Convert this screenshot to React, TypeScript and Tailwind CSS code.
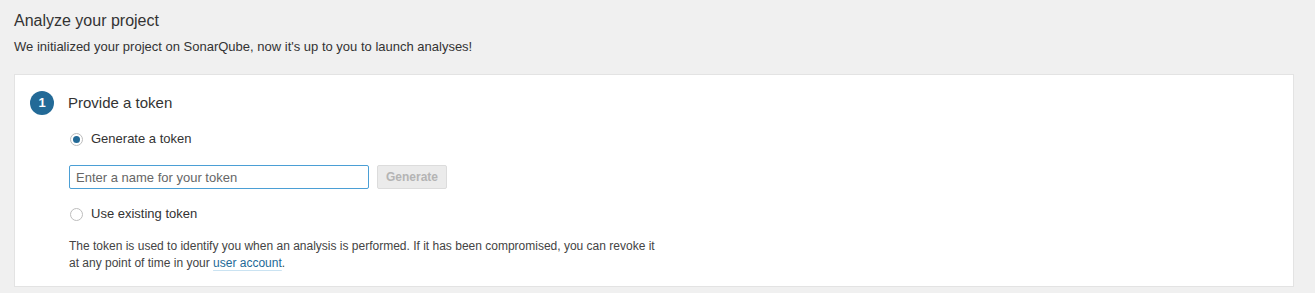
import React from 'react';

function Radio({ checked, label }: { checked?: boolean; label: string }) {
  return (
    <div className="flex items-center h-[14px]">
      <span className="flex items-center justify-center w-[13px] h-[13px] rounded-full border border-[#bdbdbd] bg-white">
        {checked && <span className="w-[7px] h-[7px] rounded-full bg-[#236a97]" />}
      </span>
      <span className="ml-[8px] text-[13px] text-[#333]">{label}</span>
    </div>
  );
}

export default function App() {
  return (
    <div className="min-h-[293px] bg-[#f0f0f0] px-[14px] pt-[9px] font-['Liberation_Sans',Arial,sans-serif] text-[#333]">
      <h1 className="text-[16px] leading-[24px] font-normal">Analyze your project</h1>
      <p className="mt-[5px] text-[13px] leading-[18px]">
        We initialized your project on SonarQube, now it's up to you to launch analyses!
      </p>

      <div className="mt-[18px] w-[1280px] h-[213px] bg-white border border-[#e3e3e3] pl-[15px] pt-[16px]">
        <div className="flex items-center">
          <span className="flex items-center justify-center w-[24px] h-[24px] rounded-full bg-[#236a97] text-white text-[13px] font-bold">
            1
          </span>
          <span className="ml-[14px] text-[15px] text-[#333]">Provide a token</span>
        </div>

        <div className="ml-[39px] mt-[17px]">
          <div className="pl-[1px]">
            <Radio checked label="Generate a token" />
          </div>

          <div className="flex items-center mt-[19px]">
            <input
              className="w-[300px] h-[24px] border border-[#4b9fd5] rounded-[2px] px-[6px] text-[13px] text-[#333] placeholder:text-[#666] outline-none"
              placeholder="Enter a name for your token"
            />
            <button className="ml-[8px] h-[24px] px-[8px] bg-[#ebebeb] border border-[#dcdcdc] rounded-[2px] text-[12px] font-bold text-[#b4b4b4]">
              Generate
            </button>
          </div>

          <div className="pl-[1px] mt-[18px]">
            <Radio label="Use existing token" />
          </div>

          <p className="mt-[17px] text-[12px] leading-[17px] text-[#444] w-[590px]">
            The token is used to identify you when an analysis is performed. If it has been compromised, you can revoke it
            at any point of time in your{' '}
            <a className="text-[#236a97] underline decoration-[#cae3f2] underline-offset-[3px]">user account</a>.
          </p>
        </div>
      </div>
    </div>
  );
}
